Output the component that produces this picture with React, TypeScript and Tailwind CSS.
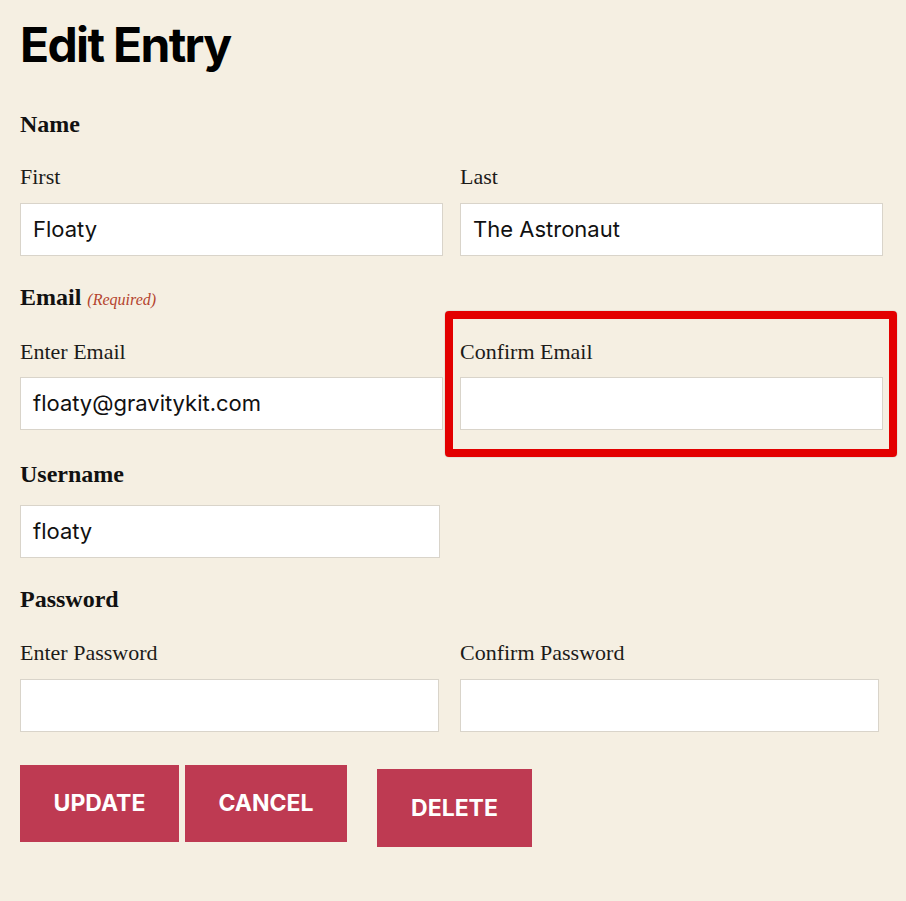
import React from "react";

const serif = "font-['Liberation_Serif','Times_New_Roman',serif]";
const sans = "font-['Inter','Roboto',sans-serif]";

function SubLabel({ children }: { children: React.ReactNode }) {
    return <div className={`${serif} text-[22px] leading-[22px] text-[#1c1b19]`}>{children}</div>;
}

function Field({ value = "", className = "" }: { value?: string; className?: string }) {
    return (
        <div className={`h-[53px] bg-white border border-[#d9d4ca] flex items-center pl-[12px] ${className}`}>
            <span className={`${sans} text-[22px] text-[#111]`}>{value}</span>
        </div>
    );
}

export default function App() {
    return (
        <div className="min-h-[901px] w-full bg-[#f5efe2]">
            <div className="px-5 pt-5 pb-12">
                <h1 className={`${sans} text-[48px] leading-[50px] font-bold tracking-[-0.035em] text-black`}>Edit Entry</h1>

                {/* Name */}
                <div className={`${serif} mt-[42px] text-[24px] leading-[24px] font-bold text-[#111]`}>Name</div>
                <div className="mt-[30px] grid grid-cols-[423px_423px] gap-x-[17px]">
                    <div>
                        <SubLabel>First</SubLabel>
                        <Field value="Floaty" className="mt-[15px]" />
                    </div>
                    <div>
                        <SubLabel>Last</SubLabel>
                        <Field value="The Astronaut" className="mt-[15px]" />
                    </div>
                </div>

                {/* Email */}
                <div className={`${serif} mt-[29px] h-[24px] text-[24px] leading-[24px] font-bold text-[#111] flex items-baseline gap-[6px]`}>
                    Email
                    <span className="text-[16px] leading-[16px] font-normal italic text-[#b4432d]">(Required)</span>
                </div>
                <div className="mt-[32px] grid grid-cols-[423px_423px] gap-x-[17px]">
                    <div>
                        <SubLabel>Enter Email</SubLabel>
                        <Field value="floaty@gravitykit.com" className="mt-[14px]" />
                    </div>
                    <div className="relative">
                        <SubLabel>Confirm Email</SubLabel>
                        <Field className="mt-[14px]" />
                        <div className="pointer-events-none absolute left-[-15px] top-[-30px] right-[-14px] bottom-[-27px] border-[8px] border-[#e30000] rounded-[4px] shadow-[0_0_1px_rgba(0,0,0,0.5)]" />
                    </div>
                </div>

                {/* Username */}
                <div className={`${serif} mt-[32px] text-[24px] leading-[24px] font-bold text-[#111]`}>Username</div>
                <Field value="floaty" className="mt-[19px] w-[420px]" />

                {/* Password */}
                <div className={`${serif} mt-[29px] text-[24px] leading-[24px] font-bold text-[#111]`}>Password</div>
                <div className="mt-[31px] grid grid-cols-[419px_419px] gap-x-[21px]">
                    <div>
                        <SubLabel>Enter Password</SubLabel>
                        <Field className="mt-[15px]" />
                    </div>
                    <div>
                        <SubLabel>Confirm Password</SubLabel>
                        <Field className="mt-[15px]" />
                    </div>
                </div>

                <div className={`${sans} mt-[33px] flex items-start text-white font-bold text-[23px]`}>
                    <button className="w-[159px] h-[77px] bg-[#be3a52] flex items-center justify-center">UPDATE</button>
                    <button className="ml-[6px] w-[162px] h-[77px] bg-[#be3a52] flex items-center justify-center">CANCEL</button>
                    <button className="ml-[30px] mt-[4px] w-[155px] h-[78px] bg-[#be3a52] flex items-center justify-center">DELETE</button>
                </div>
            </div>
        </div>
    );
}
